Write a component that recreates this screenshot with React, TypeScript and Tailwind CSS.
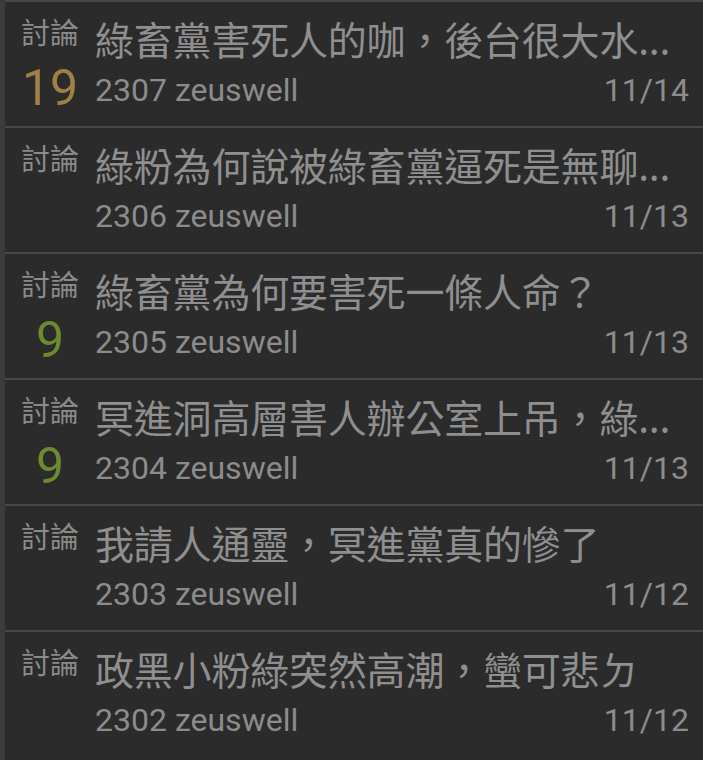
const POSTS = [
  { title: "綠畜黨害死人的咖，後台很大水...", id: 2307, date: "11/14", count: "19", tone: "gold" },
  { title: "綠粉為何說被綠畜黨逼死是無聊...", id: 2306, date: "11/13", count: "", tone: "" },
  { title: "綠畜黨為何要害死一條人命？", id: 2305, date: "11/13", count: "9", tone: "green" },
  { title: "冥進洞高層害人辦公室上吊，綠...", id: 2304, date: "11/13", count: "9", tone: "green" },
  { title: "我請人通靈，冥進黨真的慘了", id: 2303, date: "11/12", count: "", tone: "" },
  { title: "政黑小粉綠突然高潮，蠻可悲ㄉ", id: 2302, date: "11/12", count: "", tone: "" },
];

const CJK = "font-['Noto_Sans_CJK_TC','Noto_Sans',sans-serif]";
const ROBOTO = "font-['Roboto','Noto_Sans_CJK_TC',sans-serif]";

export default function App() {
  return (
    <div className="w-[703px] h-[760px] bg-[#2b2b2b] overflow-hidden">
      <div className="border-l-[5px] border-[#3c3c3c] h-full">
        {POSTS.map((p) => (
          <div
            key={p.id}
            className="flex h-[126px] border-t-2 border-b-0 border-[#474747]"
          >
            {/* left column: category + push count */}
            <div className="w-[62px] ml-[14px] flex flex-col items-center">
              <div className={`${CJK} text-[29px] leading-[29px] text-[#8a8a8a] mt-[15px]`}>
                討論
              </div>
              {p.count && (
                <div
                  className={`${ROBOTO} text-[50px] leading-[50px] mt-[17px] ${
                    p.tone === "gold" ? "text-[#a08043]" : "text-[#6d8a2f]"
                  }`}
                >
                  {p.count}
                </div>
              )}
            </div>

            {/* right column: title + meta */}
            <div className="flex-1 ml-[14px] pr-[14px] flex flex-col">
              <div
                className={`${CJK} text-[39px] leading-[39px] tracking-[-0.2px] text-[#8f8f8f] mt-[17px] whitespace-nowrap`}
              >
                {p.title}
              </div>
              <div
                className={`${ROBOTO} flex justify-between text-[32px] leading-[32px] text-[#8c8c8c] mt-[16px]`}
              >
                <span>{p.id} zeuswell</span>
                <span>{p.date}</span>
              </div>
            </div>
          </div>
        ))}
      </div>
    </div>
  );
}
